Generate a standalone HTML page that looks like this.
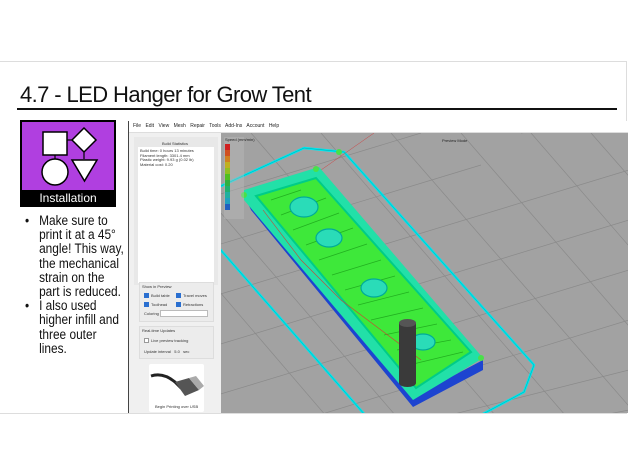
<!DOCTYPE html>
<html><head><meta charset="utf-8"><style>
*{margin:0;padding:0;box-sizing:border-box}
body{width:628px;height:472px;background:#fff;position:relative;overflow:hidden;font-family:"Liberation Sans",sans-serif}
.frame{position:absolute;left:-2px;top:61px;width:629px;height:353px;border:1px solid #ddd;background:#fff}
.title{position:absolute;left:20px;top:82px;font-size:22px;color:#111;letter-spacing:-0.6px;white-space:nowrap}
.uline{position:absolute;left:17px;top:108px;width:600px;height:2px;background:#111}
.icon{position:absolute;left:20px;top:120px;width:96px;height:87px;background:#000}
.icon .p{position:absolute;left:2px;top:2px;width:92px;height:68px;background:#b03fe0}
.icon .lbl{position:absolute;left:0;top:70px;width:96px;text-align:center;color:#fff;font-size:12px;line-height:16px}
.bul{position:absolute;left:25px;top:214px;font-size:13.5px;line-height:14.2px;color:#111;transform:scaleX(0.88);transform-origin:0 0}
.bul div{position:relative;padding-left:16px;width:113px}
.bul div:before{content:"•";position:absolute;left:0}
.shot{position:absolute;left:128px;top:121px;width:500px;height:292px;background:#f0f0f0;border-left:1px solid #444}
.menu{position:absolute;left:0;top:0;width:500px;height:11px;background:#fff;font-size:5px;line-height:11px;color:#222;padding-left:4px;word-spacing:3px}
.panel{position:absolute;left:5px;top:16px;width:84px;height:148px;background:#e8e8e8}
.box{position:absolute;background:#fff}
.sm{font-size:4px;color:#333;position:absolute;white-space:nowrap}
.grp{position:absolute;border:1px solid #ddd;background:#ececec}
.cb{display:inline-block;width:5px;height:5px;background:#2a6fd0;margin-right:2px;vertical-align:middle}
</style></head><body>
<div class="frame"></div>
<div class="title">4.7 - LED Hanger for Grow Tent</div>
<div class="uline"></div>
<div class="icon"><div class="p">
<svg width="92" height="68" viewBox="0 0 92 68">
<rect x="21" y="10" width="24" height="23" fill="#fff" stroke="#000" stroke-width="1.5"/>
<polygon points="62,6 74,18 62,30 50,18" fill="#fff" stroke="#000" stroke-width="1.5"/>
<line x1="45" y1="18" x2="50" y2="18" stroke="#000" stroke-width="1.2"/>
<line x1="62" y1="30" x2="62" y2="37" stroke="#000" stroke-width="1.2"/>
<line x1="33" y1="33" x2="33" y2="38" stroke="#000" stroke-width="1.2"/>
<circle cx="33" cy="50" r="13" fill="#fff" stroke="#000" stroke-width="1.5"/>
<polygon points="50,38 75,38 62.5,59" fill="#fff" stroke="#000" stroke-width="1.5"/>
</svg></div><div class="lbl">Installation</div></div>
<div class="bul">
<div>Make sure to print it at a 45° angle! This way, the mechanical strain on the part is reduced.</div>
<div>I also used higher infill and three outer lines.</div>
</div>
<div class="shot">
<div class="menu">File Edit View Mesh Repair Tools Add-Ins Account Help</div>
<div style="position:absolute;left:0;top:11px;width:500px;height:1px;background:#ddd"></div>
<div class="panel">
<div class="sm" style="left:28px;top:4px">Build Statistics</div>
<div class="box" style="left:4px;top:10px;width:76px;height:136px"><div class="sm" style="left:2px;top:2px;line-height:4.6px">Build time: 0 hours 13 minutes<br>Filament length: 3301.4 mm<br>Plastic weight: 9.93 g (0.02 lb)<br>Material cost: 0.20</div></div>
</div>
<div class="grp" style="left:10px;top:161px;width:75px;height:40px"><div class="sm" style="left:2px;top:1px">Show in Preview</div>
<div class="sm" style="left:4px;top:10px"><span class="cb"></span>Build table</div><div class="sm" style="left:36px;top:10px"><span class="cb"></span>Travel moves</div>
<div class="sm" style="left:4px;top:19px"><span class="cb"></span>Toolhead</div><div class="sm" style="left:36px;top:19px"><span class="cb"></span>Retractions</div>
<div class="sm" style="left:4px;top:28px">Coloring</div><div style="position:absolute;left:20px;top:27px;width:48px;height:7px;background:#fff;border:1px solid #bbb"></div></div>
<div class="grp" style="left:10px;top:205px;width:75px;height:33px"><div class="sm" style="left:2px;top:1px">Real-time Updates</div>
<div class="sm" style="left:4px;top:11px"><span class="cb" style="background:#fff;border:1px solid #999"></span>Live preview tracking</div>
<div class="sm" style="left:4px;top:22px">Update interval &nbsp; 5.0 &nbsp; sec</div></div>
<div style="position:absolute;left:20px;top:243px;width:55px;height:48px;background:#fff;border-radius:2px">
<svg width="55" height="40"><path d="M2 12 Q14 8 26 18 L32 24" stroke="#222" stroke-width="3" fill="none"/><polygon points="26,18 40,14 50,26 36,32" fill="#555"/><polygon points="40,14 47,12 55,22 50,26" fill="#aaa"/></svg>
<div class="sm" style="left:6px;top:40px">Begin Printing over USB</div></div>
<svg style="position:absolute;left:92px;top:12px" width="408" height="280" viewBox="220 133 408 280">
<rect x="220" y="133" width="408" height="280" fill="#a2a2a2"/>
<g stroke="#8a8a8a" stroke-width="0.7">
<line x1="200" y1="200" x2="420" y2="133"/><line x1="200" y1="250" x2="480" y2="165"/><line x1="200" y1="300" x2="628" y2="170"/><line x1="200" y1="350" x2="628" y2="220"/><line x1="200" y1="400" x2="628" y2="270"/><line x1="220" y1="445" x2="628" y2="320"/><line x1="330" y1="445" x2="628" y2="370"/><line x1="450" y1="445" x2="628" y2="410"/><line x1="520" y1="133" x2="628" y2="120"/>
<line x1="250" y1="133" x2="520" y2="445"/><line x1="320" y1="133" x2="590" y2="445"/><line x1="390" y1="133" x2="640" y2="420"/><line x1="460" y1="133" x2="640" y2="340"/><line x1="530" y1="133" x2="640" y2="260"/><line x1="590" y1="133" x2="640" y2="190"/><line x1="200" y1="190" x2="420" y2="445"/><line x1="200" y1="270" x2="350" y2="445"/>
</g>
<g fill="none" stroke="#00e8f0" stroke-width="2.4"><polyline points="218,187 303,148 343,152 533,365 523,392 480,415"/><polyline points="218,248 364,415"/></g>
<g fill="none" stroke="#0aa" stroke-width="0.5"><polyline points="218,187 303,148 343,152 533,365 523,392 480,415"/><polyline points="218,248 364,415"/></g>
<line x1="320" y1="170" x2="373" y2="133" stroke="#c44" stroke-width="0.5"/>
<polygon points="243,195 250,210 412,407 482,370 482,360 412,397" fill="#1d44d0"/>
<polygon points="243,190 318,167 482,358 412,400 243,200" fill="#22e0a8"/>
<polygon points="255,196 315,178 470,352 415,388" fill="#3ee83a" stroke="#0c8" stroke-width="2"/>
<g stroke="#22b020" stroke-width="0.8">
<line x1="270" y1="200" x2="300" y2="190"/><line x1="280" y1="215" x2="325" y2="198"/><line x1="292" y1="230" x2="338" y2="213"/><line x1="305" y1="245" x2="352" y2="228"/><line x1="318" y1="260" x2="366" y2="244"/><line x1="331" y1="275" x2="380" y2="260"/><line x1="344" y1="290" x2="394" y2="276"/><line x1="357" y1="305" x2="408" y2="292"/><line x1="370" y1="320" x2="422" y2="308"/><line x1="383" y1="335" x2="436" y2="324"/><line x1="396" y1="350" x2="450" y2="340"/><line x1="408" y1="365" x2="462" y2="352"/>
</g>
<polyline points="262,210 300,260 340,300 380,330 420,360" stroke="#c43" stroke-width="0.6" fill="none"/>
<g fill="#2adcb8" stroke="#0a9" stroke-width="1.2">
<ellipse cx="303" cy="207" rx="14" ry="10"/><ellipse cx="328" cy="238" rx="13" ry="9"/><ellipse cx="373" cy="288" rx="13" ry="9"/><ellipse cx="422" cy="342" rx="12" ry="8"/></g>
<g fill="#4ae04a"><circle cx="243" cy="195" r="3"/><circle cx="315" cy="169" r="3"/><circle cx="338" cy="152" r="3"/><circle cx="480" cy="358" r="3"/></g>
<rect x="398" y="323" width="17" height="60" fill="#3a3a3a"/><ellipse cx="406.5" cy="323" rx="8.5" ry="4" fill="#555"/><ellipse cx="406.5" cy="383" rx="8.5" ry="4" fill="#3a3a3a"/>
<rect x="223" y="137" width="20" height="82" fill="#bbb" opacity="0.4"/>
<g><rect x="224" y="144" width="5" height="6" fill="#d02020"/><rect x="224" y="150" width="5" height="6" fill="#d05020"/><rect x="224" y="156" width="5" height="6" fill="#d08020"/><rect x="224" y="162" width="5" height="6" fill="#c0b020"/><rect x="224" y="168" width="5" height="6" fill="#90c020"/><rect x="224" y="174" width="5" height="6" fill="#50c020"/><rect x="224" y="180" width="5" height="6" fill="#30b040"/><rect x="224" y="186" width="5" height="6" fill="#20b070"/><rect x="224" y="192" width="5" height="6" fill="#20b0a0"/><rect x="224" y="198" width="5" height="6" fill="#20a0c0"/><rect x="224" y="204" width="5" height="6" fill="#2060c0"/></g>
<text x="224" y="141" font-size="4" fill="#222">Speed (mm/min)</text>
<text x="441" y="142" font-size="4" fill="#222">Preview Mode</text>
</svg>
</div>
</body></html>
